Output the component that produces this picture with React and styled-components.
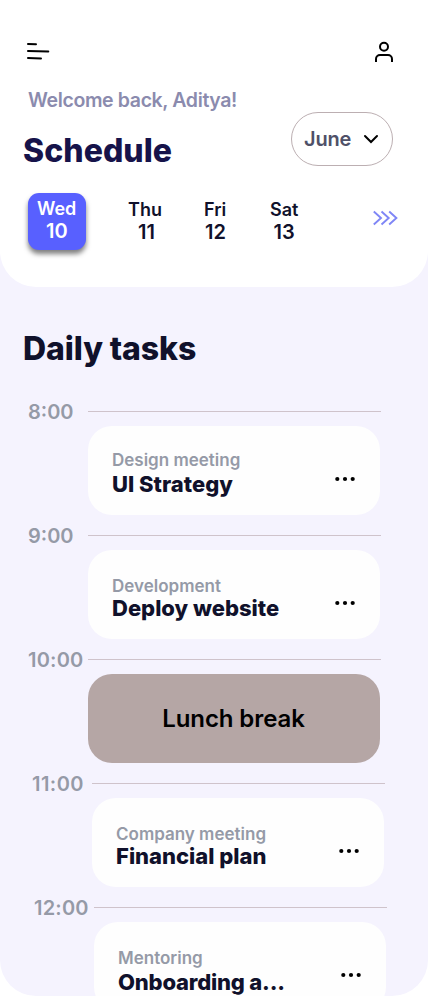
import React from "react";
import styled, { createGlobalStyle } from "styled-components";

const GlobalStyle = createGlobalStyle`
  * { box-sizing: border-box; }
  body { margin: 0; background: #fff; }
`;

const Screen = styled.main`
  width: 428px;
  height: 996px;
  overflow: hidden;
  border-radius: 0 0 36px 36px;
  background: #f5f3fe;
  font-family: Inter, sans-serif;
  white-space: nowrap;
`;

const Header = styled.header`
  height: 287px;
  padding: 40px 30px 0 23px;
  background: #fff;
  border-radius: 0 0 36px 36px;
`;

const TopBar = styled.div`
  display: flex;
  justify-content: space-between;
  height: 48px;
  svg { display: block; }
`;

const TitleBar = styled.div`
  display: flex;
  justify-content: space-between;
  height: 105px;
`;

const Greeting = styled.p`
  margin: 0 0 0 5px;
  font-size: 19.5px;
  font-weight: 600;
  line-height: 25px;
  letter-spacing: -0.37px;
  color: #8b8bae;
`;

const Heading = styled.h1`
  margin: 18px 0 0;
  font-size: 32px;
  font-weight: 800;
  line-height: 40px;
  letter-spacing: 0.05px;
  color: #16134a;
`;

const MonthButton = styled.button`
  display: flex;
  align-items: center;
  justify-content: space-between;
  width: 102px;
  height: 54px;
  margin: 24px 5px 0 0;
  padding: 0 13px 0 12px;
  border: 1px solid #bcafb2;
  border-radius: 27px;
  background: #fff;
  font-family: inherit;
  font-size: 20px;
  font-weight: 600;
  line-height: 24px;
  letter-spacing: -0.2px;
  color: #4f5168;
`;

const Days = styled.nav`
  display: grid;
  grid-template-columns: 100px 76px 66px 103px 25px;
  margin-left: 5px;
`;

const Day = styled.div`
  width: 58px;
  height: 57px;
  padding-top: ${(p) => (p.$active ? 5 : 6)}px;
  padding-left: ${(p) => (p.$active ? 9 : 0)}px;
  border-radius: 11px;
  background: ${(p) => (p.$active ? "#5860ff" : "transparent")};
  box-shadow: ${(p) => (p.$active ? "0 4px 5px rgba(0, 0, 0, 0.5)" : "none")};
  color: ${(p) => (p.$active ? "#fff" : "#10112b")};
`;

const DayName = styled.div`
  font-size: 18px;
  font-weight: 600;
  line-height: 22px;
`;

const DayNumber = styled.div`
  padding-left: ${(p) => p.$indent}px;
  font-size: 20px;
  font-weight: 600;
  line-height: 22px;
`;

const More = styled.svg`
  margin-top: 17px;
`;

const Section = styled.section`
  padding-top: 42px;
`;

const SectionTitle = styled.h2`
  margin: 0 0 31px 23px;
  font-size: 32px;
  font-weight: 800;
  line-height: 40px;
  letter-spacing: -0.08px;
  color: #10112b;
`;

const Slot = styled.article`
  display: grid;
  grid-template-columns: ${(p) => 88 + p.$shift}px 293px;
  grid-template-rows: 24px 100px;
  height: 124px;
`;

const Hour = styled.time`
  padding-left: ${(p) => p.$indent}px;
  font-size: 20px;
  font-weight: 600;
  line-height: 24px;
  letter-spacing: ${(p) => p.$tracking || 0}px;
  color: #959aa7;
`;

const Rule = styled.hr`
  width: 293px;
  height: 1px;
  margin: 11px 0 0;
  border: 0;
  background: #cfc3cb;
`;

const Card = styled.div`
  grid-column: 2;
  display: flex;
  justify-content: space-between;
  width: 292px;
  height: 89px;
  margin-top: 2px;
  padding: 0 24px;
  border-radius: 24px;
  background: #fefefe;
`;

const BreakCard = styled(Card)`
  align-items: center;
  justify-content: center;
  padding-right: 25px;
  background: #b5a6a5;
  font-size: 24px;
  font-weight: 600;
  letter-spacing: -0.1px;
  color: #000;
`;

const Category = styled.div`
  margin-top: ${(p) => p.$top}px;
  font-size: 17px;
  font-weight: 600;
  line-height: 22px;
  color: #959aa7;
`;

const TaskTitle = styled.div`
  margin-top: ${(p) => p.$gap}px;
  font-size: 22px;
  font-weight: 800;
  line-height: 22px;
  letter-spacing: ${(p) => p.$tracking || 0}px;
  color: #10112b;
`;

const Dots = styled.svg`
  margin-top: 50px;
`;

const days = [
  { name: "Wed", number: 10, indent: 9, active: true },
  { name: "Thu", number: 11, indent: 10 },
  { name: "Fri", number: 12, indent: 1 },
  { name: "Sat", number: 13, indent: 3.5 },
];

const slots = [
  { hour: "8:00", indent: 28, shift: 0, category: "Design meeting", title: "UI Strategy", top: 23, gap: 2 },
  { hour: "9:00", indent: 28, shift: 0, category: "Development", title: "Deploy website", top: 25, gap: 0 },
  { hour: "10:00", indent: 28, shift: 0, hourTracking: 0.2, rest: "Lunch break" },
  { hour: "11:00", indent: 32, shift: 4, hourTracking: 0.45, category: "Company meeting", title: "Financial plan", top: 25, gap: 0 },
  { hour: "12:00", indent: 34, shift: 6, hourTracking: 0.2, category: "Mentoring", title: "Onboarding a...", titleTracking: -0.2, top: 25, gap: 2 },
];

export default function App() {
  return (
    <Screen>
      <GlobalStyle />
      <Header>
        <TopBar>
          <svg width="30" height="24" fill="none" stroke="#000" strokeWidth="2" strokeLinecap="round">
            <path d="M5 4l8 .2M5 11l20.300.5M5 18l13 .4" />
          </svg>
          <svg width="24" height="24" fill="none" stroke="#000" strokeWidth="2">
            <circle cx="10" cy="6.800" r="4" />
            <path d="M2 22v-3a4 4 0 0 1 4-4h8a4 4 0 0 1 4 4v3" />
          </svg>
        </TopBar>
        <TitleBar>
          <div>
            <Greeting>Welcome back, Aditya!</Greeting>
            <Heading>Schedule</Heading>
          </div>
          <MonthButton>
            June
            <svg width="16" height="10" fill="none" stroke="#000" strokeWidth="2" strokeLinecap="round">
              <path d="M2 2l6 6 6-6" />
            </svg>
          </MonthButton>
        </TitleBar>
        <Days>
          {days.map((d) => (
            <Day key={d.name} $active={d.active}>
              <DayName>{d.name}</DayName>
              <DayNumber $indent={d.indent}>{d.number}</DayNumber>
            </Day>
          ))}
          <More width="25" height="16" fill="none" stroke="#7f86f6" strokeWidth="1.9">
            <path d="M.8 1.500L8 8 .8 14.500M8.500 1.500L15.700 8l-7.200 6.500M16.200 1.500L23.400 8l-7.200 6.500" />
          </More>
        </Days>
      </Header>
      <Section>
        <SectionTitle>Daily tasks</SectionTitle>
        {slots.map((s) => (
          <Slot key={s.hour} $shift={s.shift}>
            <Hour $indent={s.indent} $tracking={s.hourTracking}>{s.hour}</Hour>
            <Rule />
            {s.rest ? (
              <BreakCard>{s.rest}</BreakCard>
            ) : (
              <Card>
                <div>
                  <Category $top={s.top}>{s.category}</Category>
                  <TaskTitle $gap={s.gap} $tracking={s.titleTracking}>{s.title}</TaskTitle>
                </div>
                <Dots width="22" height="6">
                  <circle cx="3.300" cy="3" r="2.100" />
                  <circle cx="11" cy="3" r="2.100" />
                  <circle cx="18.700" cy="3" r="2.100" />
                </Dots>
              </Card>
            )}
          </Slot>
        ))}
      </Section>
    </Screen>
  );
}
